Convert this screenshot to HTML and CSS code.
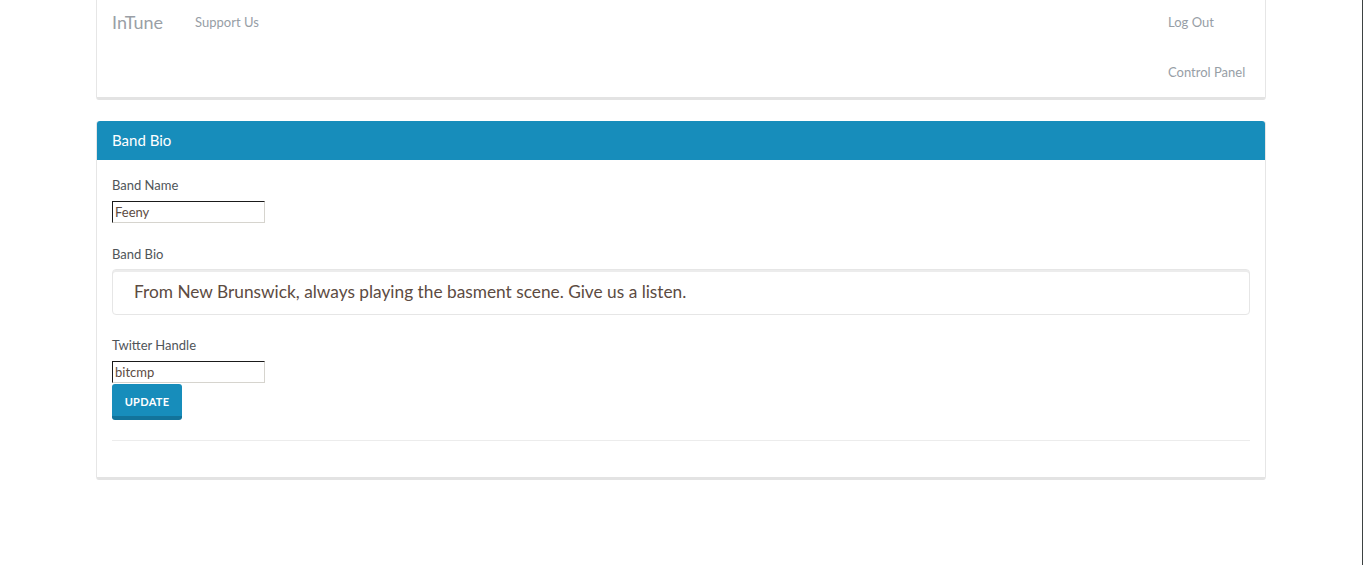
FILE: index.html
```html
<!DOCTYPE html>
<html>
<head>
<meta charset="utf-8">
<link rel="stylesheet" href="styles.css">
</head>
<body>
<div class="container">
  <nav class="navbar">
    <div class="nav-left">
      <a class="brand">InTune</a>
      <a class="nav-link">Support Us</a>
    </div>
    <ul class="nav-right">
      <li><a class="nav-link">Log Out</a></li>
      <li><a class="nav-link">Control Panel</a></li>
    </ul>
  </nav>
  <section class="panel">
    <div class="panel-heading">Band Bio</div>
    <div class="panel-body">
      <form class="form">
        <label class="label">Band Name</label>
        <input class="small-input" type="text" value="Feeny">
        <label class="label label-gap">Band Bio</label>
        <div class="bio-field">From New Brunswick, always playing the basment scene. Give us a listen.</div>
        <label class="label label-gap2">Twitter Handle</label>
        <input class="small-input" type="text" value="bitcmp">
        <button class="btn" type="button">UPDATE</button>
      </form>
      <hr class="divider">
    </div>
  </section>
</div>
</body>
</html>
```

FILE: styles.css
```css
html {
  border-right: 1px solid #3d4242;
  min-height: 100%;
  box-sizing: border-box;
}
body {
  margin: 0;
  font-family: "Lato", "Open Sans", sans-serif;
  background: #fff;
  color: #555;
}
.container {
  width: 1170px;
  margin: 0 auto;
}
.navbar {
  display: flex;
  justify-content: space-between;
  border: 1px solid #e6e6e6;
  border-top: none;
  border-bottom: 3px solid #e3e3e3;
  border-radius: 0 0 3px 3px;
  height: 100px;
  box-sizing: border-box;
  padding: 0 15px;
}
.nav-left {
  display: flex;
  align-items: flex-start;
}
.brand {
  font-size: 18px;
  color: #9a9fa6;
  line-height: 44px;
  padding-right: 32px;
}
.nav-link {
  font-size: 13px;
  color: #979ea6;
  line-height: 44px;
  display: block;
}
.nav-right {
  list-style: none;
  margin: 0;
  padding: 0;
  width: 82px;
  display: flex;
  flex-direction: column;
  gap: 6px;
}
.panel {
  margin-top: 21px;
  border: 1px solid #e6e6e6;
  border-top: none;
  border-bottom: 3px solid #e3e3e3;
  border-radius: 3px;
}
.panel-heading {
  background: #178dbb;
  color: #fff;
  font-size: 15px;
  height: 39px;
  line-height: 39px;
  padding: 0 15px;
  border-radius: 3px 3px 0 0;
}
.panel-body {
  padding: 17px 15px 36px;
}
.form {
  display: flex;
  flex-direction: column;
  align-items: flex-start;
}
.label {
  font-size: 13px;
  color: #4f5559;
  line-height: 16px;
  margin-bottom: 8px;
}
.label-gap {
  margin-top: 23px;
  margin-bottom: 7px;
}
.label-gap2 {
  margin-top: 22px;
}
.small-input {
  width: 153px;
  height: 22px;
  box-sizing: border-box;
  font-family: inherit;
  font-size: 13px;
  color: #5c4b42;
  padding: 0 2px;
  margin: 0;
  border-width: 1px;
  border-style: solid;
  border-top-color: #1a1a1a;
  border-left-color: #1a1a1a;
  border-right-color: #d6d4ce;
  border-bottom-color: #d6d4ce;
}
.bio-field {
  align-self: stretch;
  height: 46px;
  box-sizing: border-box;
  border: 1px solid #e6e6e6;
  border-radius: 4px;
  box-shadow: inset 0 2px 0 #ececec;
  padding: 0 21px;
  line-height: 44px;
  font-size: 17.3px;
  color: #5c4b42;
}
.btn {
  margin-top: 1px;
  width: 70px;
  height: 36px;
  border: none;
  border-radius: 3px;
  background: #178dbb;
  border-bottom: 4px solid #12739a;
  color: #fff;
  font-family: inherit;
  font-weight: bold;
  font-size: 11px;
  letter-spacing: 0.3px;
  padding: 2px 0 0;
}
.divider {
  border: none;
  border-top: 1px solid #ececec;
  margin: 20px 0 0;
}
```
